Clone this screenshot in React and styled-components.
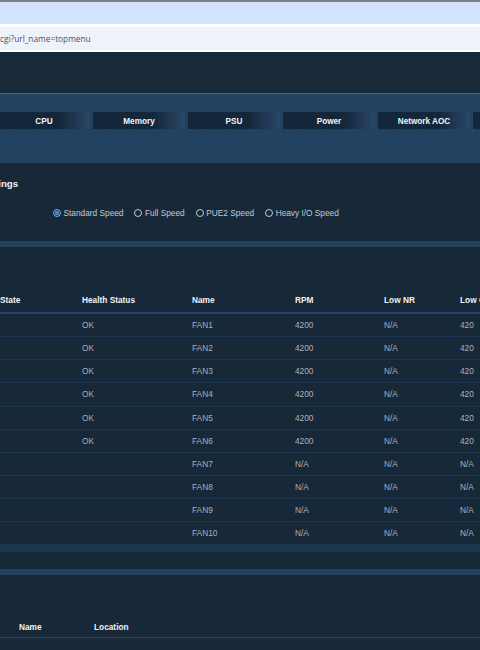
import React from "react";
import styled, { createGlobalStyle } from "styled-components";

const GlobalStyle = createGlobalStyle`
  html, body {
    margin: 0;
    padding: 0;
    background: #172839;
    font-family: "Liberation Sans", Arial, sans-serif;
  }
  * { box-sizing: border-box; }
`;

const tabs = ["CPU", "Memory", "PSU", "Power", "Network AOC", "Storage"];
const speeds = ["Standard Speed", "Full Speed", "PUE2 Speed", "Heavy I/O Speed"];
const columns = ["State", "Health Status", "Name", "RPM", "Low NR", "Low CT", "Low NC"];
const fans = Array.from({ length: 10 }, (_, i) => {
  const on = i < 6;
  return {
    state: "",
    health: on ? "OK" : "",
    name: `FAN${i + 1}`,
    rpm: on ? "4200" : "N/A",
    lowNr: "N/A",
    lowCt: on ? "420" : "N/A",
    lowNc: on ? "700" : "N/A",
  };
});

const fanCols = "82px 110px 103px 89px 76px 80px 80px";
const locCols = "75px 200px";

const dots = `
  background-image: radial-gradient(rgba(255, 255, 255, 0.035) 1px, transparent 1px);
  background-size: 3px 3px;
`;

const App = () => {
  return (
    <>
      <GlobalStyle />
      <Browser>
        <WindowStrip />
        <TabStrip />
        <Gap />
        <Address>
          <span>cgi?url_name=topmenu</span>
        </Address>
        <Gap />
      </Browser>
      <Viewport>
        <Page>
          <Header />
          <NavPanel>
            <TabRow>
              {tabs.map((t) => (
                <Tab key={t}>{t}</Tab>
              ))}
            </TabRow>
          </NavPanel>

          <Settings>
            <Title>Fan Settings</Title>
            <RadioRow>
              {speeds.map((s, i) => (
                <RadioItem key={s}>
                  <RadioDot $checked={i === 0} />
                  {s}
                </RadioItem>
              ))}
            </RadioRow>
          </Settings>
          <Strip />

          <TableSection $top={40}>
            <HeadRow $cols={fanCols} $indent={60} $h={27}>
              {columns.map((c) => (
                <HeadCell key={c}>{c}</HeadCell>
              ))}
            </HeadRow>
            {fans.map((f) => (
              <Row key={f.name} $cols={fanCols} $indent={60}>
                <Cell>{f.state}</Cell>
                <Cell>{f.health}</Cell>
                <Cell>{f.name}</Cell>
                <Cell>{f.rpm}</Cell>
                <Cell>{f.lowNr}</Cell>
                <Cell>{f.lowCt}</Cell>
                <Cell>{f.lowNc}</Cell>
              </Row>
            ))}
          </TableSection>
          <Strip $tone="#1b3550" $h={7} />
          <Spacer />
          <Strip />

          <TableSection $top={41}>
            <HeadRow $cols={locCols} $indent={79} $h={22} $border="1px">
              <HeadCell>Name</HeadCell>
              <HeadCell>Location</HeadCell>
            </HeadRow>
          </TableSection>
        </Page>
      </Viewport>
    </>
  );
};

const Browser = styled.div`
  display: flex;
  flex-direction: column;
`;

const WindowStrip = styled.div`
  height: 2px;
  background: #7b8089;
`;

const TabStrip = styled.div`
  height: 22px;
  background: #d3e3fd;
`;

const Gap = styled.div`
  height: 2.5px;
  background: #ffffff;
`;

const Address = styled.div`
  height: 23px;
  background: #eef3fb;
  display: flex;
  align-items: center;
  font-family: "Open Sans", "Liberation Sans", sans-serif;
  font-size: 8.3px;
  color: #4d5259;
  white-space: nowrap;
  padding-top: 1px;
`;

const Viewport = styled.div`
  width: 480px;
  overflow: hidden;
`;

const Page = styled.div`
  width: 700px;
  margin-left: -60px;
  background: #172839;
`;

const Header = styled.div`
  height: 42px;
  background: #192a3b;
  border-bottom: 1px solid #3a6a96;
`;

const NavPanel = styled.div`
  height: 69px;
  padding-top: 18px;
  background-color: #22415f;
  ${dots}
`;

const TabRow = styled.div`
  display: flex;
  gap: 3px;
  padding-left: 58px;
`;

const Tab = styled.div`
  flex: 0 0 92px;
  height: 17px;
  padding-top: 1px;
  display: flex;
  align-items: center;
  justify-content: center;
  background: linear-gradient(90deg, #14263a 0%, #14263a 66%, #2a4868 100%);
  color: #f2f4f7;
  font-size: 8.2px;
  font-weight: bold;
`;

const Settings = styled.div`
  padding: 15px 0 22px 20px;
`;

const Title = styled.div`
  height: 12px;
  line-height: 12px;
  font-size: 9.7px;
  font-weight: bold;
  color: #f2f4f7;
`;

const RadioRow = styled.div`
  margin-top: 17px;
  padding-left: 93px;
  height: 12px;
  display: flex;
  align-items: center;
  gap: 11px;
`;

const RadioItem = styled.label`
  display: flex;
  align-items: center;
  gap: 2.5px;
  font-size: 8.3px;
  color: #c3c9d1;
  white-space: nowrap;
`;

const RadioDot = styled.span`
  width: 8px;
  height: 8px;
  border-radius: 50%;
  border: 1px solid ${(p) => (p.$checked ? "#7fa6d6" : "#c3c9d1")};
  background: ${(p) =>
    p.$checked ? "radial-gradient(circle, #4a82c8 0 45%, #1f3d5e 60%)" : "transparent"};
`;

const Strip = styled.div`
  height: ${(p) => p.$h || 6}px;
  background-color: ${(p) => p.$tone || "#22415f"};
  ${dots}
`;

const Spacer = styled.div`
  height: 17px;
`;

const TableSection = styled.div`
  padding-top: ${(p) => p.$top}px;
`;

const HeadRow = styled.div`
  display: grid;
  grid-template-columns: ${(p) => p.$cols};
  padding-left: ${(p) => p.$indent}px;
  height: ${(p) => p.$h}px;
  align-items: center;
  border-bottom: ${(p) => p.$border || "2px"} solid #24446a;
`;

const HeadCell = styled.div`
  font-size: 8.3px;
  font-weight: bold;
  color: #f0f2f5;
  white-space: nowrap;
`;

const Row = styled.div`
  display: grid;
  grid-template-columns: ${(p) => p.$cols};
  padding-left: ${(p) => p.$indent}px;
  height: 23.15px;
  align-items: center;
  border-bottom: 1px solid #1d3651;
`;

const Cell = styled.div`
  font-size: 8.3px;
  color: #aab2bc;
  white-space: nowrap;
`;

export default App;
